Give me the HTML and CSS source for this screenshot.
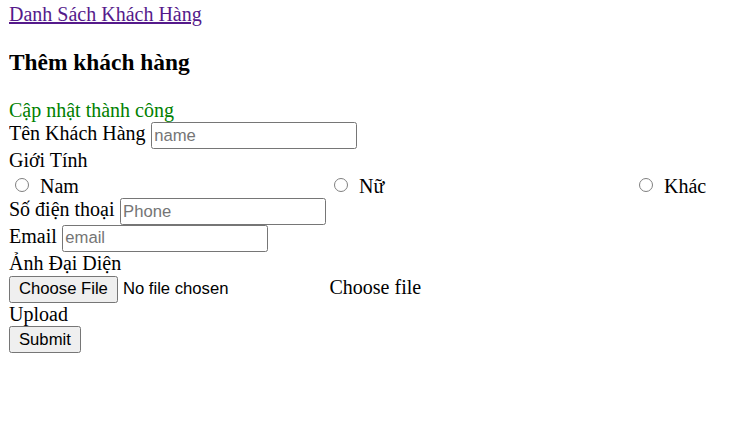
FILE: index.html
```html
<!DOCTYPE html>
<html lang="vi">
<head>
<meta charset="utf-8">
<title>Thêm khách hàng</title>
<link rel="stylesheet" href="styles.css">
</head>
<body>
<a class="back-link" href="#">Danh Sách Khách Hàng</a>
<h3 class="title">Thêm khách hàng</h3>
<div class="alert-success">Cập nhật thành công</div>
<form class="customer-form" action="#">
  <div class="row"><label for="name">Tên Khách Hàng</label> <input id="name" class="field" type="text" placeholder="name"></div>
  <div class="row">Giới Tính</div>
  <div class="gender-group">
    <label class="gender-option"><input class="radio" type="radio" name="gender"> Nam</label>
    <label class="gender-option"><input class="radio" type="radio" name="gender"> Nữ</label>
    <label class="gender-option"><input class="radio" type="radio" name="gender"> Khác</label>
  </div>
  <div class="row"><label for="phone">Số điện thoại</label> <input id="phone" class="field" type="text" placeholder="Phone"></div>
  <div class="row"><label for="email">Email</label> <input id="email" class="field" type="text" placeholder="email"></div>
  <div class="row">Ảnh Đại Diện</div>
  <div class="file-row">
    <span class="file-input"><span class="file-btn">Choose File</span><span class="file-name">No file chosen</span></span>
    <label class="file-label">Choose file</label>
  </div>
  <div class="row">Upload</div>
  <div class="row"><button class="btn" type="button">Submit</button></div>
</form>
</body>
</html>
```

FILE: styles.css
```css
html {
  background: #fff;
}

body {
  margin: 3px 9px 0;
  font-family: "Liberation Serif", "Times New Roman", serif;
  font-size: 20px;
  color: #000;
}

.back-link {
  color: #551a8b;
  text-decoration: underline;
}

.title {
  font-size: 23.4px;
  font-weight: bold;
  margin: 23.4px 0 23px;
}

.alert-success {
  color: #008000;
}

.customer-form {
  margin: 0;
}

.row {
  margin: 0;
}

.field {
  box-sizing: border-box;
  width: 206px;
  height: 26.67px;
  margin: 0;
  padding: 0 2.5px;
  border: 1px solid #767676;
  border-radius: 2.5px;
  font-family: "Liberation Sans", Arial, sans-serif;
  font-size: 16.67px;
  color: #000;
  background: #fff;
  outline: none;
}

.field::placeholder {
  color: #757575;
}

.gender-group {
  display: grid;
  grid-template-columns: 319px 305px auto;
}

.radio {
  appearance: none;
  -webkit-appearance: none;
  box-sizing: border-box;
  width: 14px;
  height: 14px;
  margin: 5.83px 6px 1.5px 6px;
  border: 1px solid #808080;
  border-radius: 50%;
  background: #fff;
  vertical-align: baseline;
}

.file-row {
  display: grid;
  grid-template-columns: 320.5px auto;
  align-items: baseline;
}

.file-input {
  display: inline-flex;
  align-items: baseline;
  font-family: "Liberation Sans", Arial, sans-serif;
  font-size: 16.67px;
}

.file-btn,
.btn {
  box-sizing: border-box;
  display: inline-flex;
  align-items: center;
  height: 27px;
  margin: 1px 0 0;
  padding: 0 9px;
  border: 1px solid #767676;
  border-radius: 2.5px;
  background: #efefef;
  color: #000;
  font-family: "Liberation Sans", Arial, sans-serif;
  font-size: 16.67px;
}

.file-name {
  margin-left: 5px;
}

.btn {
  height: 26.67px;
  margin: 0.7px 0 0;
}
```
